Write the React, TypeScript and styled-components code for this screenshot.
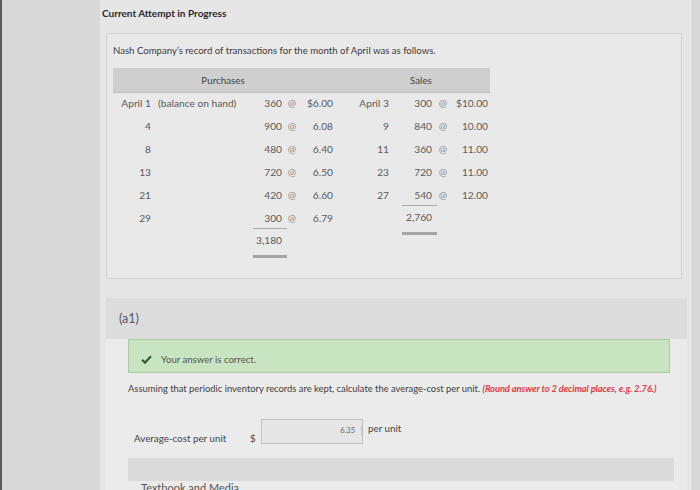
import styled, { createGlobalStyle, css } from "styled-components";

const GlobalStyle = createGlobalStyle`
  html, body {
    margin: 0;
    padding: 0;
    background: #d8d8d8;
    font-family: Lato, "Open Sans", "Liberation Sans", sans-serif;
    overflow: hidden;
  }
`;

const Page = styled.div`
  display: flex;
  width: 700px;
  height: 490px;
  overflow: hidden;
  border-left: 2px solid #5a5a5a;
  box-sizing: border-box;
`;

const Gutter = styled.div`
  width: 98px;
  flex-shrink: 0;
  background: #d9d9d9;
`;

const Main = styled.main`
  width: 590px;
  background: #e6e6e6;
  border-right: 1px solid #d2d2d2;
  padding: 6px 0 0 2px;
`;

const Title = styled.h1`
  margin: 0 0 13px;
  font-size: 10px;
  font-weight: 700;
  color: #2a2a2a;
  line-height: 14px;
`;

const Card = styled.section`
  margin-left: 4px;
  width: 576px;
  height: 246px;
  box-sizing: border-box;
  border: 1px solid #d3d3d3;
  background: #e9e9e9;
  padding: 11px 6px 0;
`;

const Intro = styled.p`
  margin: 0 0 11px;
  font-size: 9.6px;
  line-height: 12px;
  color: #3a3a3a;
`;

const Grid = styled.div`
  display: grid;
  width: 377px;
  grid-template-columns: 38px 89px 42px 20px 31px 56px 43px 22px 34px 2px;
  grid-auto-rows: 23px;
  font-size: 10.2px;
  color: #5a5a5a;
`;

const Head = styled.div<{ $span: string; $pad?: number }>`
  grid-column: ${(p) => p.$span};
  background: #cfcfcf;
  border-bottom: 1px solid #bdbdbd;
  height: 24px;
  display: flex;
  align-items: center;
  justify-content: ${(p) => (p.$pad ? "flex-start" : "center")};
  padding-left: ${(p) => p.$pad ?? 0}px;
  font-size: 9.8px;
  color: #444;
`;

const Cell = styled.div<{
  $align?: "left" | "right" | "center";
  $rule?: "single" | "double";
  $padL?: number;
}>`
  display: flex;
  align-items: center;
  justify-content: ${(p) =>
    p.$align === "left" ? "flex-start" : p.$align === "center" ? "center" : "flex-end"};
  padding-left: ${(p) => p.$padL ?? 0}px;
  white-space: nowrap;
  ${(p) =>
    p.$rule === "single" &&
    css`
      box-shadow: inset 0 -1px 0 #a9a9a9;
      margin: 0 -5px 0 13px;
      padding-right: 5px;
    `}
  ${(p) =>
    p.$rule === "double" &&
    css`
      box-shadow: inset 0 -3px 0 #a5a5a5;
      margin: 0 -5px 0 13px;
      padding-right: 5px;
      height: 29px;
      align-items: flex-start;
      padding-top: 5px;
      box-sizing: border-box;
    `}
`;

const At = styled(Cell).attrs({ $align: "center" as const })`
  color: #8a8a8a;
`;

const Section = styled.section`
  margin: 19px 0 0 4px;
  width: 581px;
  background: #ebebeb;
`;

const SectionHead = styled.div`
  height: 41px;
  background: #dcdcdc;
  display: flex;
  align-items: center;
  padding-left: 13px;
  font-size: 12.5px;
  color: #4d5a6e;
`;

const Body = styled.div`
  padding: 0 17px 0 22px;
`;

const Notice = styled.div`
  height: 34px;
  box-sizing: border-box;
  border: 1px solid #a9cc9f;
  background: #c9e4c0;
  display: flex;
  align-items: center;
  padding: 6px 0 0 12px;
  gap: 9px;
  font-size: 9.6px;
  color: #555;
`;

const Prompt = styled.p`
  margin: 10px -6px 0 0;
  font-size: 9.4px;
  white-space: nowrap;
  color: #3d3d3d;
`;

const Hint = styled.span`
  color: #e03c45;
  font-style: italic;
  font-weight: 700;
  letter-spacing: -0.1px;
`;

const AnswerRow = styled.div`
  display: flex;
  align-items: center;
  margin-top: 25px;
  padding-left: 6px;
  font-size: 9.8px;
  color: #444;
`;

const Label = styled.span`
  width: 116px;
  padding-top: 12px;
`;

const Dollar = styled.span`
  width: 11px;
  padding-top: 12px;
`;

const Input = styled.div`
  width: 102px;
  height: 25px;
  box-sizing: border-box;
  border: 1px solid #c3c3c3;
  background: #e6e6e6;
  display: flex;
  justify-content: flex-end;
  padding: 6px 0 0;
  font-size: 7.5px;
  color: #666;
`;

const InputValue = styled.span`
  border-right: 1px solid #c3c3c3;
  padding: 0 6px 0 0;
  height: 10px;
`;

const Unit = styled.span`
  margin-left: 5px;
  margin-bottom: 7px;
`;

const Media = styled.div`
  margin-top: 14px;
  height: 23px;
  background: #dadada;
  width: 546px;
`;

const MediaLabel = styled.div`
  padding: 0 0 0 13px;
  font-size: 11px;
  line-height: 13px;
  color: #555;
`;

const Check = () => (
  <svg width="11" height="9" viewBox="0 0 11 9">
    <path d="M1 4.8 L4 7.6 L10 1.3" fill="none" stroke="#2f5f2c" strokeWidth="2.2" />
  </svg>
);

type Row = {
  day: string;
  note?: string;
  q: string;
  p: string;
  sDay?: string;
  sq?: string;
  sp?: string;
  qRule?: boolean;
  sqRule?: boolean;
  sTotal?: string;
};

const rows: Row[] = [
  { day: "April 1", note: "(balance on hand)", q: "360", p: "$6.00", sDay: "April 3", sq: "300", sp: "$10.00" },
  { day: "4", q: "900", p: "6.08", sDay: "9", sq: "840", sp: "10.00" },
  { day: "8", q: "480", p: "6.40", sDay: "11", sq: "360", sp: "11.00" },
  { day: "13", q: "720", p: "6.50", sDay: "23", sq: "720", sp: "11.00" },
  { day: "21", q: "420", p: "6.60", sDay: "27", sq: "540", sp: "12.00", sqRule: true },
  { day: "29", q: "300", p: "6.79", qRule: true, sTotal: "2,760" },
];

const App = () => {
  return (
    <>
      <GlobalStyle />
      <Page>
        <Gutter />
        <Main>
          <Title>Current Attempt in Progress</Title>
          <Card>
            <Intro>Nash Company’s record of transactions for the month of April was as follows.</Intro>
            <Grid>
              <Head $span="1 / 6">Purchases</Head>
              <Head $span="6 / 11" $pad={77}>Sales</Head>
              {rows.flatMap((r) => [
                <Cell key={r.day + "a"}>{r.day}</Cell>,
                <Cell key={r.day + "b"} $align="left" $padL={7}>{r.note ?? ""}</Cell>,
                <Cell key={r.day + "c"} $rule={r.qRule ? "single" : undefined}>{r.q}</Cell>,
                <At key={r.day + "d"}>@</At>,
                <Cell key={r.day + "e"}>{r.p}</Cell>,
                <Cell key={r.day + "f"}>{r.sDay ?? ""}</Cell>,
                <Cell
                  key={r.day + "g"}
                  $rule={r.sqRule ? "single" : r.sTotal ? "double" : undefined}
                >
                  {r.sq ?? r.sTotal ?? ""}
                </Cell>,
                r.sq ? <At key={r.day + "h"}>@</At> : <Cell key={r.day + "h"} />,
                <Cell key={r.day + "i"}>{r.sp ?? ""}</Cell>,
                <Cell key={r.day + "j"} />,
              ])}
              <Cell />
              <Cell />
              <Cell $rule="double">3,180</Cell>
            </Grid>
          </Card>
          <Section>
            <SectionHead>(a1)</SectionHead>
            <Body>
              <Notice>
                <Check />
                Your answer is correct.
              </Notice>
              <Prompt>
                Assuming that periodic inventory records are kept, calculate the average-cost per unit.{" "}
                <Hint>(Round answer to 2 decimal places, e.g. 2.76.)</Hint>
              </Prompt>
              <AnswerRow>
                <Label>Average-cost per unit</Label>
                <Dollar>$</Dollar>
                <Input>
                  <InputValue>6.35</InputValue>
                </Input>
                <Unit>per unit</Unit>
              </AnswerRow>
              <Media />
              <MediaLabel>Textbook and Media</MediaLabel>
            </Body>
          </Section>
        </Main>
      </Page>
    </>
  );
};

export default App;
